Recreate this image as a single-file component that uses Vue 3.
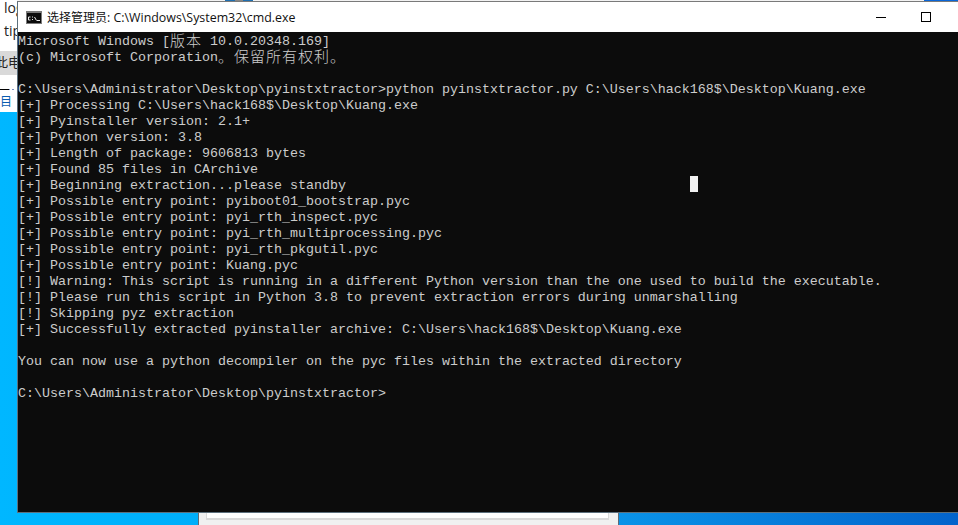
<script setup>
const lines = [
  [{ t: 'Microsoft Windows [' }, { t: '版本', c: 1 }, { t: ' 10.0.20348.169]' }],
  [{ t: '(c) Microsoft Corporation' }, { t: '。保留所有权利。', c: 1 }],
  [],
  [{ t: 'C:\\Users\\Administrator\\Desktop\\pyinstxtractor>python pyinstxtractor.py C:\\Users\\hack168$\\Desktop\\Kuang.exe' }],
  [{ t: '[+] Processing C:\\Users\\hack168$\\Desktop\\Kuang.exe' }],
  [{ t: '[+] Pyinstaller version: 2.1+' }],
  [{ t: '[+] Python version: 3.8' }],
  [{ t: '[+] Length of package: 9606813 bytes' }],
  [{ t: '[+] Found 85 files in CArchive' }],
  [{ t: '[+] Beginning extraction...please standby' }],
  [{ t: '[+] Possible entry point: pyiboot01_bootstrap.pyc' }],
  [{ t: '[+] Possible entry point: pyi_rth_inspect.pyc' }],
  [{ t: '[+] Possible entry point: pyi_rth_multiprocessing.pyc' }],
  [{ t: '[+] Possible entry point: pyi_rth_pkgutil.pyc' }],
  [{ t: '[+] Possible entry point: Kuang.pyc' }],
  [{ t: '[!] Warning: This script is running in a different Python version than the one used to build the executable.' }],
  [{ t: '[!] Please run this script in Python 3.8 to prevent extraction errors during unmarshalling' }],
  [{ t: '[!] Skipping pyz extraction' }],
  [{ t: '[+] Successfully extracted pyinstaller archive: C:\\Users\\hack168$\\Desktop\\Kuang.exe' }],
  [],
  [{ t: 'You can now use a python decompiler on the pyc files within the extracted directory' }],
  [],
  [{ t: 'C:\\Users\\Administrator\\Desktop\\pyinstxtractor>' }],
]
</script>

<template>
  <div class="desktop">
    <div class="side">
      <div class="side-row log">log</div>
      <div class="side-row tip">tip</div>
      <div class="side-row sel">此电</div>
      <div class="side-rule"></div>
      <div class="side-row mu">目</div>
    </div>

    <div class="behind">
      <div class="behind-inner"></div>
    </div>

    <div class="topstrip">
      <span class="seg s1"></span>
      <span class="seg s2"></span>
      <span class="seg s3"></span>
      <span class="seg s4"></span>
    </div>

    <div class="cmd">
      <header class="titlebar">
        <svg class="appicon" width="16" height="13" viewBox="0 0 16 13">
          <rect x="0" y="0" width="16" height="13" fill="#7a7a7a" />
          <rect x="1" y="2" width="14" height="10" fill="#0c0c0c" />
          <path d="M2.5 6h2M2.5 6v3M2.5 9h2M6 6h1M6 8.5h1M8.5 6l2 3.5M11 9.5h3" stroke="#e8e8e8" stroke-width="1" fill="none" />
        </svg>
        <span class="title"><span class="title-cjk">选择管理员</span>: C:\Windows\System32\cmd.exe</span>
        <div class="controls">
          <span class="min"></span>
          <span class="max"></span>
        </div>
      </header>
      <main class="console">
        <div v-for="(line, i) in lines" :key="i" class="line">
          <span v-for="(part, j) in line" :key="j" :class="{ cjk: part.c }">{{ part.t }}</span>
        </div>
        <span class="cursor"></span>
      </main>
    </div>
  </div>
</template>

<style>
html, body { margin: 0; background: #00b4ff; }
</style>

<style scoped>
.desktop {
  position: relative;
  width: 958px;
  height: 525px;
  overflow: hidden;
  background: linear-gradient(90deg, #00b7ff 0, #00aefa 198px, #0a93e8 618px, #0363cb 958px);
}
.side {
  position: absolute;
  left: 0;
  top: 0;
  width: 60px;
  height: 112px;
  background: #fff;
  display: flex;
  flex-direction: column;
  overflow: hidden;
  font-family: "Open Sans", "Noto Sans CJK SC", sans-serif;
  color: #222;
}
.side-row { flex: none; white-space: nowrap; }
.log { height: 25px; line-height: 16px; padding-left: 4px; font-size: 14px; }
.tip { height: 26px; line-height: 12px; padding-left: 4px; font-size: 14px; }
.sel { height: 24px; line-height: 22px; background: #d9d9d9; font-size: 13px; text-indent: -5px; }
.side-rule {
  flex: none;
  height: 1px;
  margin-top: 14px;
  background: linear-gradient(90deg, #000 0 9px, #7a8fc0 9px 10px, #fff 10px 12px, #7a8fc0 12px 14px, #fff 14px);
}
.mu { box-sizing: border-box; height: 22px; padding-top: 4px; line-height: 16px; color: #0a5db0; font-size: 12px; }
.behind {
  position: absolute;
  left: 198px;
  top: 480px;
  width: 421px;
  height: 45px;
  box-sizing: border-box;
  background: #f0f0f0;
  border-left: 1px solid #5f6b75;
  border-right: 1px solid #5f6b75;
}
.behind-inner {
  position: absolute;
  left: 7px;
  right: 9px;
  top: 0;
  height: 38px;
  background: #fff;
  border: solid #d9d9d9;
  border-width: 0 1px 2px;
}
.topstrip {
  position: absolute;
  left: 17px;
  top: 0;
  right: 0;
  height: 1px;
  background: #f2f2f2;
  display: flex;
}
.seg { display: block; height: 1px; }
.s1 { margin-left: 208px; width: 10px; background: #1f6fb0; }
.s2 { width: 8px; background: #888; }
.s3 { width: 10px; background: #1f6fb0; }
.s4 { margin-left: auto; width: 34px; background: #0a66d8; }
.cmd {
  position: absolute;
  left: 17px;
  top: 1px;
  width: 960px;
  height: 512px;
  box-sizing: border-box;
  border: 1px solid #5c6f7c;
  border-top-color: #7a7a7a;
  border-right: 0;
  display: flex;
  flex-direction: column;
}
.titlebar {
  height: 30px;
  flex: none;
  background: #fff;
  display: flex;
  align-items: center;
  padding-left: 8px;
  position: relative;
}
.appicon { flex: none; }
.title {
  margin-left: 5px;
  font-family: "Open Sans", "Noto Sans CJK SC", sans-serif;
  font-size: 12.4px;
  color: #111;
  white-space: nowrap;
}
.title-cjk { font-family: "Noto Sans CJK SC", sans-serif; font-size: 12px; }
.controls {
  position: absolute;
  left: 858px;
  top: 0;
  height: 30px;
  display: flex;
  align-items: center;
  gap: 35px;
}
.min { width: 10px; height: 1px; background: #000; }
.max { width: 8px; height: 8px; border: 1px solid #000; }
.console {
  flex: 1;
  position: relative;
  background: #0c0c0c;
  padding-top: 2px;
  color: #cccccc;
  font-family: "Liberation Mono", "Noto Sans CJK SC", monospace;
  font-size: 13.333px;
  line-height: 16px;
}
.line {
  height: 16px;
  white-space: pre;
}
.cjk {
  display: inline-block;
  vertical-align: top;
  height: 16px;
  font-family: "Noto Sans CJK SC", sans-serif;
  font-size: 15px;
  letter-spacing: 1px;
  line-height: 11px;
  font-weight: 300;
}
.cursor {
  position: absolute;
  left: 672px;
  top: 144px;
  width: 8px;
  height: 16px;
  background: #f2f2f2;
}
</style>
